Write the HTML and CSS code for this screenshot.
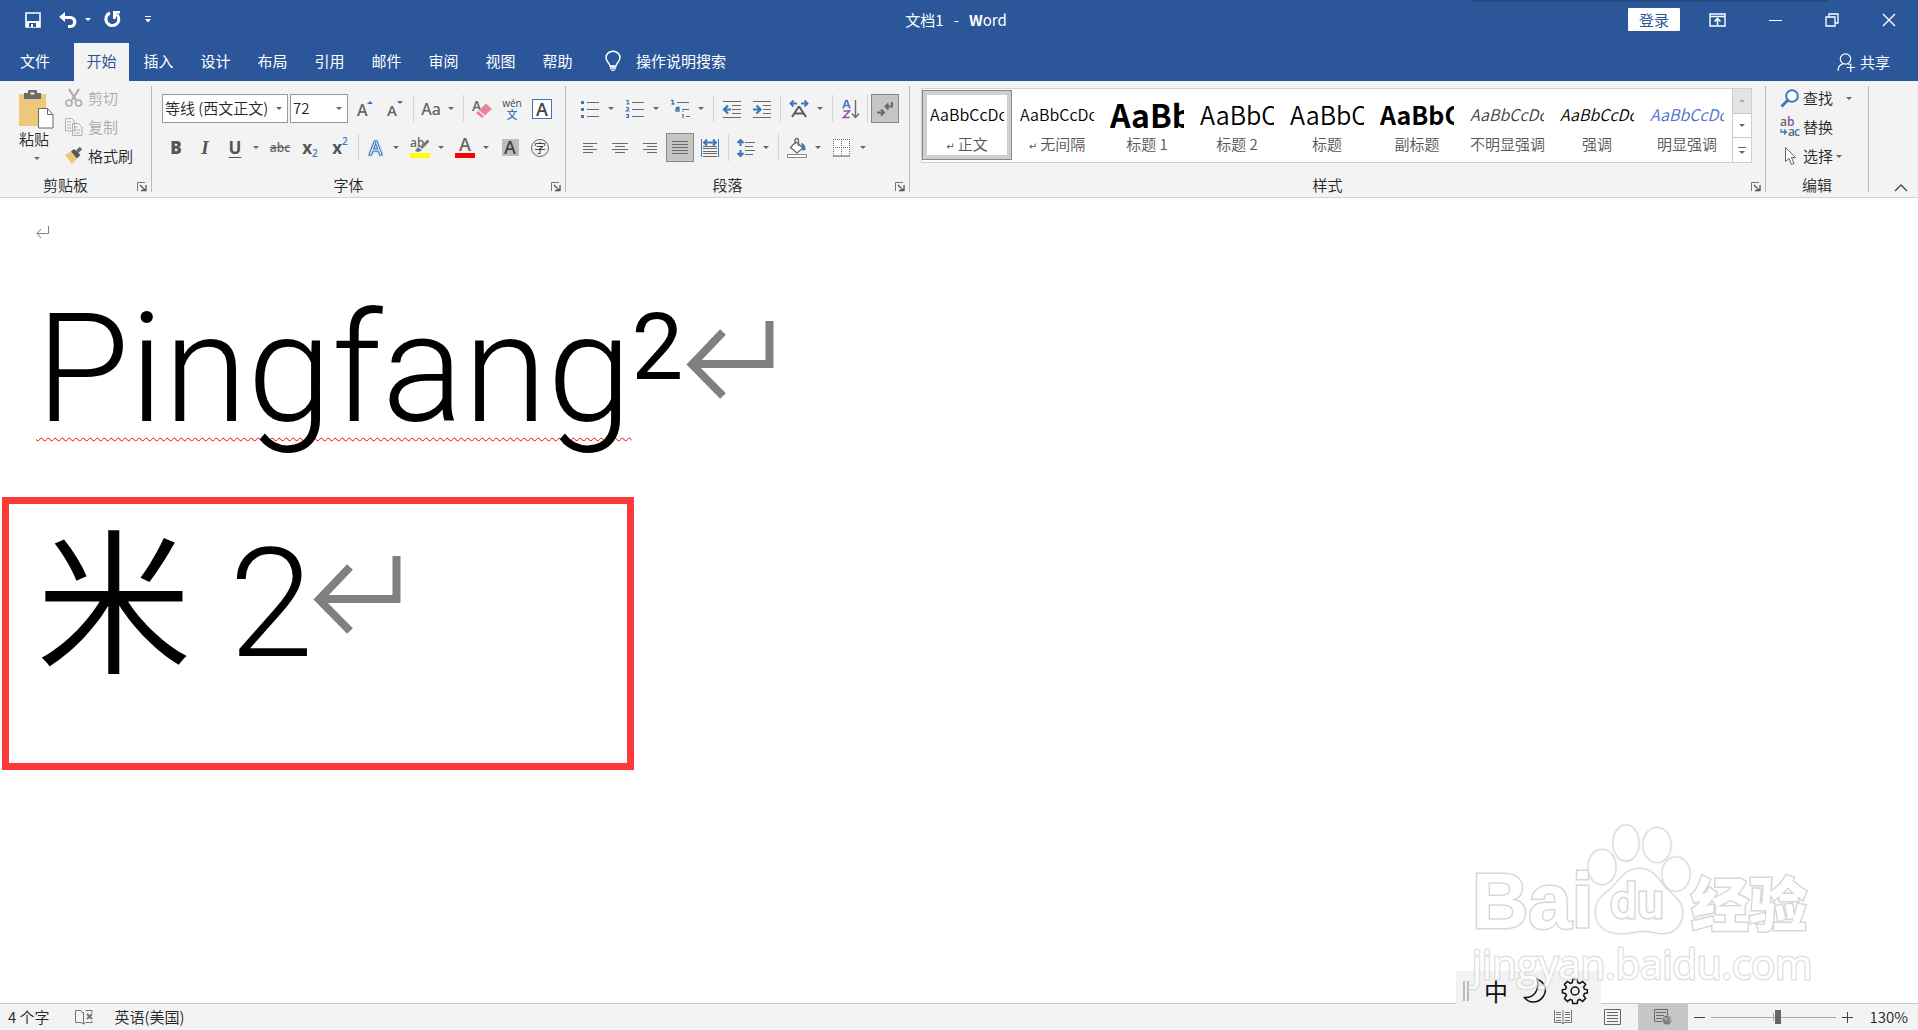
FILE: index.html
```html
<!DOCTYPE html>
<html lang="zh-CN">
<head>
<meta charset="utf-8">
<title>文档1 - Word</title>
<link rel="stylesheet" href="styles.css">
</head>
<body>
<div class="app">
  <header class="titlebar">
    <div class="quick">
      <button class="tb tb-save" aria-label="保存"><svg width="16" height="16" viewBox="0 0 16 16"><path d="M1 1h14v14H1z" fill="none" stroke="#fff" stroke-width="1.6"/><path d="M1 9h14v6H1z" fill="#fff"/><path d="M4 11h7v4H4z" fill="#2b579a"/><path d="M6 12h2v3H6z" fill="#fff"/></svg></button>
      <button class="tb" aria-label="撤消"><svg width="18" height="16" viewBox="0 0 18 16"><path d="M6 0L0 5l6 5V7h5a3 3 0 0 1 0 6H9v3h2.500a6 6 0 0 0 0-12H6z" fill="#fff"/></svg></button>
      <button class="dd dd-light" aria-label="撤消列表"></button>
      <button class="tb tb-redo" aria-label="重复"><svg width="18" height="17" viewBox="0 0 18 17"><path d="M6 2A6.500 6.500 0 1 0 13 3.500" fill="none" stroke="#fff" stroke-width="3"/><path d="M9 0h7v2.500h-3L11.500 8H9z" fill="#fff"/></svg></button>
      <button class="tb" aria-label="自定义快速访问工具栏"><svg width="6" height="7" viewBox="0 0 6 7"><path d="M0 .5h6" stroke="#fff"/><path d="M0 3h6L3 6.500z" fill="#fff"/></svg></button>
    </div>
    <div class="doc-title">文档1&nbsp;&nbsp; -&nbsp;&nbsp; <b>W</b>ord</div>
    <div class="window-controls">
      <button class="login">登录</button>
      <button class="win" aria-label="功能区显示选项"><svg width="17" height="14" viewBox="0 0 17 14"><path d="M1 1h15v12H1zM1 3.500h15" fill="none" stroke="#fff" stroke-width="1.400"/><path d="M8.500 12V6M5.500 8.500l3-3 3 3" fill="none" stroke="#fff" stroke-width="1.600"/></svg></button>
      <button class="win" aria-label="最小化"><svg width="14" height="14" viewBox="0 0 14 14"><path d="M1 7.500h13" stroke="#fff"/></svg></button>
      <button class="win" aria-label="还原"><svg width="14" height="14" viewBox="0 0 14 14"><path d="M1 4h9v9H1zM4 4V1h9v9h-3" fill="none" stroke="#fff" stroke-width="1.300"/></svg></button>
      <button class="win" aria-label="关闭"><svg width="14" height="14" viewBox="0 0 14 14"><path d="M1 1l12 12M13 1L1 13" stroke="#fff" stroke-width="1.400"/></svg></button>
    </div>
    <span class="top-shade"></span>
  </header>

  <nav class="tabs">
    <button class="tab tab-file">文件</button>
    <button class="tab tab-active">开始</button>
    <button class="tab">插入</button>
    <button class="tab">设计</button>
    <button class="tab">布局</button>
    <button class="tab">引用</button>
    <button class="tab">邮件</button>
    <button class="tab">审阅</button>
    <button class="tab">视图</button>
    <button class="tab">帮助</button>
    <button class="tell-me"><svg width="16" height="20" viewBox="0 0 16 20"><path d="M5 15c0-3-4-4-4-8.500a6.700 6 0 0 1 14 0C15 11 11 12 11 15z" fill="none" stroke="#fff" stroke-width="1.500"/><path d="M5 15h6v3.500H5z" fill="#fff" opacity=".8"/><path d="M6.500 19.500h3" stroke="#fff"/></svg>操作说明搜索</button>
    <button class="share"><svg width="19" height="19" viewBox="0 0 19 19"><circle cx="8.500" cy="6" r="5.200" fill="none" stroke="#fff" stroke-width="1.200"/><path d="M1 18c0-4 2-6.500 5-7.200M11 10.800l1.500 1M9.500 14.500H18M13.800 10.500V19" fill="none" stroke="#fff" stroke-width="1.200"/></svg>共享</button>
  </nav>

  <section class="ribbon">
    <div class="group group-clip">
      <div class="clip-body">
        <button class="paste"><svg width="35" height="39" viewBox="0 0 35 39"><rect y="4" width="27" height="32" rx="1" fill="#eec77d"/><path d="M5 3h4V1q0-1 1-1h7q1 0 1 1v2h4v6H5z" fill="#6a6a6a"/><path d="M11.500 3.500h4" stroke="#f3f3f3" stroke-width="2"/><path d="M19.500 18.500h9l5.500 6v13.500H19.500z" fill="#fff" stroke="#6a6a6a"/><path d="M28.500 18.500v6H34" fill="none" stroke="#6a6a6a"/></svg><span>粘贴</span><i class="caret"></i></button>
        <div class="stack">
          <button class="line-btn off"><svg width="18" height="18" viewBox="0 0 18 18"><path d="M4 0l7 11M14 0L7 11" stroke="#aaa" stroke-width="2.200"/><circle cx="4" cy="14" r="3" fill="none" stroke="#aaa" stroke-width="1.600"/><circle cx="13.500" cy="14" r="3" fill="none" stroke="#aaa" stroke-width="1.600"/></svg>剪切</button>
          <button class="line-btn off"><svg width="18" height="18" viewBox="0 0 18 18"><path d="M.5.500h6l3 3V13h-9zM7.500 5.500h6l3.500 3.500v8.500H7.500z" fill="#f6f3f6" stroke="#b5abb5"/><path d="M2 4h4M2 7h4M2 10h4M9.500 9h3M9.500 12h5.500M9.500 15h5.500" stroke="#b5abb5"/></svg>复制</button>
          <button class="line-btn"><svg width="18" height="18" viewBox="0 0 18 18"><path d="M0 8l6-3.500 6 7L7 17z" fill="#eec77d"/><path d="M6 4.500l3-2.500 6.500 6-3.500 3.500z" fill="#555"/><path d="M12 5l4-4" stroke="#6a6a6a" stroke-width="3.500"/></svg>格式刷</button>
        </div>
      </div>
      <div class="foot"><span>剪贴板</span><button class="launch" aria-label="剪贴板设置"><svg width="10" height="9" viewBox="0 0 10 9"><path d="M.5 9V.5H8" fill="none" stroke="#777"/><path d="M3 3l5 5M9 3v5.500H4" fill="none" stroke="#555" stroke-width="1.300"/></svg></button></div>
    </div>

    <div class="group group-font">
      <div class="rows">
        <div class="row">
          <span class="combo combo-font"><select aria-label="字体"><option>等线 (西文正文)</option></select></span>
          <span class="combo combo-size"><select aria-label="字号"><option>72</option></select></span>
          <button class="ic" aria-label="增大字号"><svg width="16" height="18" viewBox="0 0 16 18"><text x="0" y="16" class="t16">A</text><path d="M10 4l3-3 3 3z" fill="#3a78b8"/></svg></button>
          <button class="ic" aria-label="减小字号"><svg width="16" height="18" viewBox="0 0 16 18"><text x="0" y="16" class="t15">A</text><path d="M10 1h6l-3 3z" fill="#3a78b8"/></svg></button>
          <i class="sep"></i>
          <button class="ic ic-mid aa" aria-label="更改大小写">Aa</button><button class="dd" aria-label="大小写选项"></button>
          <i class="sep"></i>
          <button class="ic" aria-label="清除所有格式"><svg width="20" height="20" viewBox="0 0 20 20"><text x="0" y="12" class="t14">A</text><path d="M4 14L14 4.500l6 5.500L10 19z" fill="#e8849a"/><path d="M6.500 11.500l6 5.500" stroke="#f3f3f3" stroke-width="1.200"/></svg></button>
          <button class="ic pinyin" aria-label="拼音指南"><span>wén</span><b>文</b></button>
          <button class="ic" aria-label="字符边框"><span class="boxed-a">A</span></button>
        </div>
        <div class="row">
          <button class="ic ic-mid glyph" aria-label="加粗"><b>B</b></button>
          <button class="ic glyph serif" aria-label="倾斜"><i>I</i></button>
          <button class="ic glyph" aria-label="下划线"><u>U</u></button>
          <button class="dd" aria-label="下划线样式"></button>
          <button class="ic strike" aria-label="删除线"><s>abc</s></button>
          <button class="ic glyph" aria-label="下标">x<sub>2</sub></button>
          <button class="ic glyph" aria-label="上标">x<sup>2</sup></button>
          <i class="sep"></i>
          <button class="ic ic-mid" aria-label="文本效果"><svg width="20" height="20" viewBox="0 0 20 20"><text x="3" y="17" class="fx">A</text></svg></button><button class="dd" aria-label="文本效果选项"></button>
          <button class="ic" aria-label="突出显示"><svg width="20" height="20" viewBox="0 0 20 20"><text x="0" y="9" class="t12">ab</text><path d="M18.500 2.500L11 10" stroke="#777" stroke-width="3"/><path d="M8 9l4 3.500-4 1.500-3-1z" fill="#777"/><path d="M0 15h20v5H0z" fill="#ff0"/></svg></button><button class="dd" aria-label="突出显示颜色"></button>
          <button class="ic" aria-label="字体颜色"><svg width="20" height="20" viewBox="0 0 20 20"><text x="4" y="13" class="t18">A</text><path d="M0 15h20v5H0z" fill="red"/></svg></button><button class="dd" aria-label="字体颜色选项"></button>
          <button class="ic" aria-label="字符底纹"><span class="shade-a">A</span></button>
          <button class="ic" aria-label="带圈字符"><span class="ring">字</span></button>
        </div>
      </div>
      <div class="foot"><span>字体</span><button class="launch" aria-label="字体设置"><svg width="10" height="9" viewBox="0 0 10 9"><path d="M.5 9V.5H8" fill="none" stroke="#777"/><path d="M3 3l5 5M9 3v5.500H4" fill="none" stroke="#555" stroke-width="1.300"/></svg></button></div>
    </div>

    <div class="group group-para">
      <div class="rows">
        <div class="row">
          <button class="ic" aria-label="项目符号"><svg width="18" height="18" viewBox="0 0 18 18"><path d="M6 2.500h12M6 9.500h12M6 16.500h12" stroke="#6a6a6a"/><path d="M0 1h3v3H0zM0 8h3v3H0zM0 15h3v3H0z" fill="#3a78b8"/></svg></button><button class="dd" aria-label="项目符号库"></button>
          <button class="ic" aria-label="编号"><svg width="18" height="18" viewBox="0 0 18 18"><path d="M6 2.500h12M6 9.500h12M6 16.500h12" stroke="#6a6a6a"/><path d="M0 .5h2V4M.5 4h3M0 7.500h2.500V9L.5 11h3M0 14.500h2.500v3H0M1 16h1.500" fill="none" stroke="#3a78b8" stroke-width="1.200"/></svg></button><button class="dd" aria-label="编号库"></button>
          <button class="ic" aria-label="多级列表"><svg width="18" height="18" viewBox="0 0 18 18"><path d="M6 2.500h12M11 9.500h7M15 16.500h4" stroke="#6a6a6a"/><path d="M0 .5h2V4M.5 4h3M5 7.500h3V11H5V9h3M12 11v1M12 14v4" fill="none" stroke="#3a78b8" stroke-width="1.300"/></svg></button><button class="dd" aria-label="多级列表选项"></button>
          <i class="sep"></i>
          <button class="ic" aria-label="减少缩进量"><svg width="18" height="18" viewBox="0 0 18 18"><path d="M0 1.500h18M9 5.500h9M9 9.500h9M9 13.500h9M0 17.500h18" stroke="#6a6a6a"/><path d="M8 9.500H2M5 5.500L1 9.500l4 4" fill="none" stroke="#3a78b8" stroke-width="2.200"/></svg></button>
          <button class="ic" aria-label="增加缩进量"><svg width="18" height="18" viewBox="0 0 18 18"><path d="M0 1.500h18M10 5.500h8M10 9.500h8M10 13.500h8M0 17.500h18" stroke="#6a6a6a"/><path d="M0 9.500h7M3.500 5.500l4 4-4 4" fill="none" stroke="#3a78b8" stroke-width="2.200"/></svg></button>
          <i class="sep"></i>
          <button class="ic" aria-label="中文版式"><svg width="20" height="18" viewBox="0 0 20 18"><path d="M3 17L9.500 7h1L17 17M6 13.500h8" fill="none" stroke="#5a5a5a" stroke-width="2"/><path d="M8 3.500H2M4.500.5l-3 3 3 3M12 3.500h6M15.500.5l3 3-3 3" fill="none" stroke="#3a78b8" stroke-width="1.800"/></svg></button><button class="dd" aria-label="中文版式选项"></button>
          <i class="sep"></i>
          <button class="ic" aria-label="排序"><svg width="18" height="20" viewBox="0 0 18 20"><path d="M1 9.500L4 1.500h1l3 8M2.500 6.500h4" fill="none" stroke="#3a78b8" stroke-width="1.600"/><path d="M1.500 12h6l-6 6.500h6" fill="none" stroke="#8a4fa8" stroke-width="1.500"/><path d="M13.500 1v17M10 14.500l3.500 4 3.500-4" fill="none" stroke="#6a6a6a" stroke-width="1.400"/></svg></button>
          <i class="sep sep-tight"></i>
          <button class="ic ic-on" aria-label="显示编辑标记"><svg width="16" height="16" viewBox="0 0 16 16"><path d="M15 1v4.500H9M11.500 2.500l-3 3 3 3M0 11.500h6M4 8.500l3 3-3 3" fill="none" stroke="#6a6a6a" stroke-width="2"/></svg></button>
        </div>
        <div class="row">
          <button class="ic" aria-label="左对齐"><svg width="16" height="14" viewBox="0 0 16 14"><path d="M1 2.500h14M1 5.500h10M1 8.500h14M1 11.500h10" stroke="#6a6a6a"/></svg></button>
          <button class="ic" aria-label="居中"><svg width="16" height="14" viewBox="0 0 16 14"><path d="M0 2.500h16M3 5.500h10M0 8.500h16M3 11.500h10" stroke="#6a6a6a"/></svg></button>
          <button class="ic" aria-label="右对齐"><svg width="16" height="14" viewBox="0 0 16 14"><path d="M1 2.500h14M5 5.500h10M1 8.500h14M5 11.500h10" stroke="#6a6a6a"/></svg></button>
          <button class="ic ic-on" aria-label="两端对齐"><svg width="16" height="14" viewBox="0 0 16 14"><path d="M0 .5h16M0 3.500h16M0 6.500h16M0 9.500h16M0 12.500h16" stroke="#6a6a6a"/></svg></button>
          <button class="ic" aria-label="分散对齐"><svg width="18" height="18" viewBox="0 0 18 18"><path d="M.5 0v18M17.500 0v18" stroke="#3a78b8"/><path d="M2 7.500h14M2 9.500h14M2 12.500h14M2 14.500h14M2 17.500h14" stroke="#6a6a6a"/><path d="M3 3.500h12M6 .5l-3 3 3 3M12 .5l3 3-3 3" fill="none" stroke="#3a78b8" stroke-width="2"/></svg></button>
          <i class="sep"></i>
          <button class="ic ic-mid" aria-label="行距"><svg width="18" height="18" viewBox="0 0 18 18"><path d="M8 3.500h10M8 7.500h8M8 11.500h10M8 15.500h8" stroke="#6a6a6a"/><path d="M3.500 1v6M.5 4l3-3 3 3M3.500 17v-6M.5 14l3 3 3-3" fill="none" stroke="#3a78b8" stroke-width="2"/></svg></button><button class="dd" aria-label="行距选项"></button>
          <i class="sep"></i>
          <button class="ic" aria-label="底纹"><svg width="20" height="20" viewBox="0 0 20 20"><path d="M9 4l7 6-6 5-6.500-5.500z" fill="#fff" stroke="#6a6a6a" stroke-width="1.300"/><path d="M8 6V1.500q2-2 3.500 0V8" fill="none" stroke="#6a6a6a" stroke-width="1.300"/><path d="M14 5q5 1 4.500 7l-3 .5z" fill="#3a78b8"/><path d="M.5 16.500h19v3H.5z" fill="#fff" stroke="#888"/></svg></button><button class="dd" aria-label="底纹颜色"></button>
          <button class="ic" aria-label="边框"><svg width="18" height="18" viewBox="0 0 18 18"><path d="M0 0h17v17H0z" fill="#fff"/><path d="M.5 0v17M8.500 0v17M16.500 0v17M0 .5h17M0 8.500h17" stroke="#666" stroke-dasharray="1 1"/><path d="M0 17h17" stroke="#555"/></svg></button><button class="dd" aria-label="边框选项"></button>
        </div>
      </div>
      <div class="foot"><span>段落</span><button class="launch" aria-label="段落设置"><svg width="10" height="9" viewBox="0 0 10 9"><path d="M.5 9V.5H8" fill="none" stroke="#777"/><path d="M3 3l5 5M9 3v5.500H4" fill="none" stroke="#555" stroke-width="1.300"/></svg></button></div>
    </div>

    <div class="group group-styles">
      <div class="gallery">
        <div class="cards">
          <button class="card card-on"><span class="pv">AaBbCcDc</span><span class="nm"><small>↵</small> 正文</span></button>
          <button class="card"><span class="pv">AaBbCcDc</span><span class="nm"><small>↵</small> 无间隔</span></button>
          <button class="card"><span class="pv pv-h1">AaBb</span><span class="nm">标题 1</span></button>
          <button class="card"><span class="pv pv-h2">AaBbC</span><span class="nm">标题 2</span></button>
          <button class="card"><span class="pv pv-h2">AaBbC</span><span class="nm">标题</span></button>
          <button class="card"><span class="pv pv-h2 pv-bold">AaBbC</span><span class="nm">副标题</span></button>
          <button class="card"><span class="pv pv-it pv-gray">AaBbCcDc</span><span class="nm">不明显强调</span></button>
          <button class="card"><span class="pv pv-it">AaBbCcDc</span><span class="nm">强调</span></button>
          <button class="card"><span class="pv pv-it pv-blue">AaBbCcDc</span><span class="nm">明显强调</span></button>
        </div>
        <div class="scroller">
          <button class="off" aria-label="上一行"><i class="caret up"></i></button>
          <button aria-label="下一行"><i class="caret"></i></button>
          <button class="more" aria-label="其他"><i class="caret"></i></button>
        </div>
      </div>
      <div class="foot"><span>样式</span><button class="launch" aria-label="样式窗格"><svg width="10" height="9" viewBox="0 0 10 9"><path d="M.5 9V.5H8" fill="none" stroke="#777"/><path d="M3 3l5 5M9 3v5.500H4" fill="none" stroke="#555" stroke-width="1.300"/></svg></button></div>
    </div>

    <div class="group group-edit">
      <div class="stack">
        <button class="line-btn"><svg width="20" height="19" viewBox="0 0 20 19"><circle cx="12" cy="7" r="5.800" fill="#fff" stroke="#3a78b8" stroke-width="2"/><path d="M8 11l-6.500 6.500" stroke="#3a78b8" stroke-width="3"/></svg>查找<i class="caret caret-far"></i></button>
        <button class="line-btn"><svg width="20" height="19" viewBox="0 0 20 19"><text x="0" y="8" class="t12">a</text><text x="7" y="8" class="t12 violet">b</text><text x="8" y="18" class="t12">a</text><text x="14" y="18" class="t12 blue">c</text><path d="M1 11v3h5M4 11.500l2.500 2.500L4 16.500" fill="none" stroke="#3a78b8" stroke-width="1.300"/></svg>替换</button>
        <button class="line-btn"><svg width="20" height="19" viewBox="0 0 20 19"><path d="M5.500.500v14l3.500-3 2.500 6 2.500-1-2.500-6h4z" fill="#fff" stroke="#666"/></svg>选择<i class="caret"></i></button>
      </div>
      <div class="foot"><span>编辑</span></div>
    </div>
    <button class="collapse" aria-label="折叠功能区"><svg width="14" height="8" viewBox="0 0 14 8"><path d="M1 7l6-6 6 6" fill="none" stroke="#444" stroke-width="1.300"/></svg></button>
  </section>

  <main class="page">
    <p class="para-empty"><svg width="14" height="12" viewBox="0 0 14 12"><path d="M12.500 0v7.500H1M5 3L1 7.500 5 12" fill="none" stroke="#808080"/></svg></p>
    <p class="big"><span class="squiggle">Pingfang</span><sup>2</sup><svg class="ret" width="88" height="78" viewBox="0 0 88 78"><path d="M83.500 0v43H8M37 11L6 43.500 37 75" fill="none" stroke="#808080" stroke-width="8"/></svg></p>
    <div class="framed">
      <p class="big"><span class="han">米</span> 2<svg class="ret" width="88" height="78" viewBox="0 0 88 78"><path d="M83.500 0v43H8M37 11L6 43.500 37 75" fill="none" stroke="#808080" stroke-width="8"/></svg></p>
    </div>
  </main>

  <footer class="status">
    <span class="words">4 个字</span>
    <button class="st-btn proof" aria-label="校对"><svg width="18" height="15" viewBox="0 0 18 15"><path d="M8.500 2.500H7L6 .5H.500v12H6l2.500 1.500 2-1.500h6.500V11M8.500 2v12M10.500.500H17V3" fill="none" stroke="#777"/><path d="M12 4l5 5M17 4l-5 5" stroke="#777" stroke-width="2"/></svg></button>
    <button class="st-btn lang">英语(美国)</button>
    <div class="views">
      <button class="view" aria-label="阅读视图"><svg width="18" height="16" viewBox="0 0 18 16"><path d="M.5 1v12.500H7l2 1 2-1h6.500V1M9 1v14M2 3.500h5M2 5.500h5M2 8.500h5M2 11.500h5M11 3.500h5M11 5.500h5M11 8.500h5M11 11.500h5" fill="none" stroke="#777"/></svg></button>
      <button class="view" aria-label="页面视图"><svg width="17" height="16" viewBox="0 0 17 16"><path d="M.5.500h16v15H.500zM3 3.500h11M3 6.500h11M3 9.500h11M3 12.500h11" fill="none" stroke="#666"/></svg></button>
      <button class="view view-on" aria-label="Web 版式视图"><svg width="18" height="16" viewBox="0 0 18 16"><path d="M8 12.500H.500V.500h13V6M2 3.500h10M2 6.500h8M2 9.500h6" fill="none" stroke="#6a6a6a"/><circle cx="13" cy="11" r="4.500" fill="#7c7c7c"/><path d="M10 9l3 1-1 2M14 8l3 2-2 3" stroke="#c6c6c6" fill="none"/></svg></button>
      <button class="zoom-btn" aria-label="缩小"><svg width="11" height="11" viewBox="0 0 11 11"><path d="M0 5.500h11" stroke="#444"/></svg></button>
      <input class="zoom" type="range" min="0" max="100" value="54" aria-label="缩放">
      <button class="zoom-btn" aria-label="放大"><svg width="11" height="11" viewBox="0 0 11 11"><path d="M0 5.500h11M5.500 0v11" stroke="#444"/></svg></button>
      <button class="st-btn percent">130%</button>
    </div>
  </footer>

  <div class="ime">
    <i class="grip"></i><span>中</span>
    <svg width="24" height="26" viewBox="0 0 24 26"><path d="M14 1c7 3 11 10 6.500 17C16 25.500 6 26 1.500 19.500 11 20 17 12 14 1z" fill="none" stroke="#111" stroke-width="1.500"/></svg>
    <svg width="26" height="26" viewBox="0 0 26 26"><path d="M10.800 1.200h4.400l.6 3.400 2 .8 2.800-2 3 3-2 2.800.8 2 3 .6v3l-3 .8-.8 2 2 2.800-3 3-2.800-2-2 .8-.6 3.200h-4.400l-.6-3.200-2-.8-2.800 2-3-3 2-2.800-.8-2-3.200-.8v-3l3.200-.6.8-2-2-2.800 3-3 2.800 2 2-.8z" fill="none" stroke="#111" stroke-width="1.500"/><circle cx="13" cy="13" r="4" fill="none" stroke="#111" stroke-width="1.500"/></svg>
  </div>

  <div class="mark">
    <div class="mark-top">
      <span class="mark-bai">Bai</span>
      <span class="paw"><svg width="104" height="112" viewBox="0 0 104 112"><g fill="#fff" stroke="#d6d6d6" stroke-width="2"><ellipse cx="15" cy="43" rx="13.500" ry="17"/><ellipse cx="39" cy="19" rx="12.500" ry="17.500"/><ellipse cx="70" cy="21" rx="13.500" ry="17"/><ellipse cx="89" cy="50" rx="13.500" ry="16.500"/><path d="M52 45c15 0 20 12 28 21 9 8 16 13 15 24-1 13-10 20-21 19-9-1-14-3-22-2-9 1-13 3-21 2-14-1-22-9-22-21 0-11 7-17 14-22 10-8 14-21 29-21z"/></g></svg><b>du</b></span>
      <span class="mark-cn">经验</span>
    </div>
    <div class="mark-url">jingyan.baidu.com</div>
  </div>
</div>
</body>
</html>
```
FILE: styles.css
```css
* { box-sizing: border-box; }

body {
  margin: 0;
  font: 350 15px/20px "Noto Sans CJK SC", sans-serif;
  color: #262626;
  background: #fff;
}

button, select, input {
  font: inherit;
  color: inherit;
  margin: 0;
  padding: 0;
  border: 0;
  background: none;
}

svg { display: block; flex: none; overflow: visible; }
p { margin: 0; }

.app {
  position: relative;
  display: flex;
  flex-direction: column;
  min-height: 100vh;
  overflow: hidden;
}

/* title bar */
.titlebar {
  position: relative;
  display: grid;
  grid-template-columns: 1fr auto 1fr;
  align-items: center;
  height: 43px;
  padding-bottom: 4px;
  background: #2b579a;
  color: #fff;
  font-weight: 400;
}
.quick { display: flex; align-items: center; padding-left: 25px; }
.tb-save { margin-right: 18px; }
.tb-redo { margin-left: 2px; margin-right: 23px; }
.doc-title { padding-right: 6px; }
.doc-title b { font-weight: 700; }
.window-controls {
  display: flex;
  justify-content: flex-end;
  align-items: center;
  padding-right: 1px;
}
.login {
  width: 52px;
  height: 23px;
  margin-right: 9px;
  background: #fff;
  color: #2b579a;
  line-height: 22px;
  border-radius: 1px;
}
.win {
  width: 57px;
  height: 24px;
  display: flex;
  align-items: center;
  justify-content: center;
}
.top-shade {
  position: absolute;
  top: 0;
  right: 90px;
  width: 356px;
  height: 2px;
  background: #244a80;
}

/* tabs */
.tabs {
  display: flex;
  gap: 2px;
  height: 38px;
  background: #2b579a;
  color: #fff;
  font-weight: 400;
}
.tab { width: 55px; height: 38px; padding-bottom: 2px; }
.tab-file { width: 72px; padding-right: 2px; }
.tab-active { background: #f3f3f3; color: #2b579a; }
.tell-me {
  display: flex;
  align-items: center;
  gap: 15px;
  margin-left: 18px;
  padding-bottom: 2px;
}
.share {
  display: flex;
  align-items: center;
  gap: 4px;
  margin-left: auto;
  padding-right: 28px;
}

/* ribbon */
.ribbon {
  display: flex;
  height: 117px;
  padding: 5px 0;
  background: #f3f3f3;
  border-bottom: 1px solid #d2d2d2;
}
.group {
  display: flex;
  flex-direction: column;
  justify-content: space-between;
  border-right: 1px solid #b8b8b8;
}
.group-clip { width: 152px; }
.group-font { width: 414px; padding-left: 10px; }
.group-para { width: 344px; padding-left: 9px; }
.group-styles { flex: 1; min-width: 0; padding-left: 11px; }
.group-edit { width: 103px; padding-left: 14px; }

.foot { display: flex; align-items: center; height: 15px; }
.foot span { flex: 1; text-align: center; }
.group-font .foot { margin-left: -10px; }
.group-para .foot { margin-left: -9px; }
.group-styles .foot { margin-left: -11px; }
.group-edit .foot { margin-left: -14px; }
.launch { width: 20px; height: 12px; padding: 3px 0 0 6px; }

.caret {
  width: 0;
  height: 0;
  border: 3px solid transparent;
  border-top-color: #666;
  border-bottom: 0;
}
.up { border-top: 0; border-bottom: 3px solid #aaa; }

.clip-body { display: flex; padding-left: 19px; }
.paste {
  display: flex;
  flex-direction: column;
  align-items: center;
  width: 35px;
  margin-right: 11px;
  padding-top: 4px;
}
.paste span { align-self: flex-start; white-space: nowrap; margin-bottom: 8px; }
.stack { display: flex; flex-direction: column; }
.line-btn {
  display: flex;
  align-items: center;
  gap: 5px;
  height: 29px;
  padding-bottom: 5px;
  white-space: nowrap;
}
.group-edit .line-btn { gap: 3px; }
.line-btn.off { color: #aaa; }
.caret-far { margin-left: 10px; }

.rows { display: flex; flex-direction: column; gap: 10px; padding-top: 8px; }
.row { display: flex; align-items: center; height: 29px; }
.combo {
  position: relative;
  display: block;
  height: 29px;
  margin-right: 2px;
  background: #fff;
  border: 1px solid #999;
}
.combo::after {
  content: "";
  position: absolute;
  right: 5px;
  top: 12px;
  border: 3px solid transparent;
  border-top-color: #666;
  border-bottom: 0;
}
.combo select {
  appearance: none;
  width: 100%;
  height: 27px;
  padding: 0 0 2px 2px;
}
.combo-font { width: 126px; }
.combo-size { width: 58px; }

.ic {
  display: flex;
  flex: none;
  align-items: center;
  justify-content: center;
  width: 30px;
  height: 29px;
}
.ic-mid { width: 28px; }
.ic-on {
  width: 28px;
  margin: 0 1px;
  background: #c6c6c6;
  border: 1px solid #888;
}
.dd {
  display: flex;
  flex: none;
  align-items: center;
  justify-content: center;
  width: 12px;
  height: 24px;
  margin-right: 3px;
}
.dd::after {
  content: "";
  border: 3px solid transparent;
  border-top-color: #666;
  border-bottom: 0;
}
.dd-light { width: 22px; }
.dd-light::after { border-top-color: #fff; }
.sep {
  width: 1px;
  height: 27px;
  margin: 0 3px;
  background: #d4d4d4;
}
.sep-tight { margin: 0 2px 0 1px; }

.aa { font: 500 16px/20px "Noto Sans", sans-serif; color: #666; }
.glyph { font: 700 17px/20px "Open Sans", sans-serif; color: #555; }
.glyph sub, .glyph sup {
  font-size: 10px;
  line-height: 14px;
  color: #3a78b8;
  font-weight: 600;
}
.glyph sub { align-self: flex-end; padding-bottom: 2px; }
.glyph sup { align-self: flex-start; padding-top: 1px; }
.glyph u { text-underline-offset: 3px; text-decoration-thickness: 1px; }
.serif { font-family: "Liberation Serif", serif; font-size: 19px; }
.strike { font: 600 12px/20px "Open Sans", sans-serif; color: #666; }
.fx {
  font: 600 20px "Open Sans", sans-serif;
  fill: #fff;
  stroke: #3a78b8;
  stroke-width: 1px;
  filter: drop-shadow(0 0 1px #8abcf0);
}
.pinyin { flex-direction: column; }
.pinyin span { font: 400 10px/10px "Open Sans", sans-serif; color: #444; }
.pinyin b { font-size: 11px; line-height: 12px; font-weight: 500; color: #3a78b8; }
.boxed-a, .shade-a {
  width: 20px;
  height: 20px;
  font: 600 18px/18px "Open Sans", sans-serif;
  color: #444;
  background: #fff;
  border: 1px solid #3a78b8;
}
.shade-a { width: 17px; height: 17px; line-height: 17px; background: #bdbdbd; border: 0; }
.ring {
  width: 18px;
  height: 18px;
  font-size: 12px;
  line-height: 16px;
  border: 1px solid #666;
  border-radius: 50%;
}

.t12, .t14, .t15, .t16, .t18 { font-family: "Open Sans", sans-serif; font-weight: 600; fill: #666; }
.t12 { font-size: 12px; }
.t14 { font-size: 14px; }
.t15 { font-size: 15px; }
.t16 { font-size: 16px; }
.t18 { font-size: 18px; }
.violet { fill: #8a4fa8; }
.blue { fill: #3a78b8; }

/* style gallery */
.gallery {
  display: flex;
  height: 75px;
  margin: 2px 13px 0 0;
  background: #fff;
  border: 1px solid #d0d0d0;
}
.cards { display: flex; flex: 1; min-width: 0; overflow: hidden; padding-top: 1px; }
.card {
  display: flex;
  flex: 1;
  flex-direction: column;
  min-width: 0;
  height: 70px;
  padding: 11px 8px 0;
}
.card-on { padding: 6px 3px 0; border: 5px solid #cfcfcb; outline: 1px solid #888; outline-offset: -1px; }
.pv {
  height: 33px;
  width: 100%;
  overflow: hidden;
  white-space: nowrap;
  text-align: left;
  color: #000;
  font-size: 16px;
  line-height: 26px;
}
.pv-h1 { font-size: 32px; font-weight: 700; }
.pv-h2 { font-size: 25px; }
.pv-bold { font-weight: 700; }
.pv-it { font-style: italic; }
.pv-gray { color: #404040; }
.pv-blue { color: #4472c4; }
.nm { width: 100%; color: #555; text-align: center; line-height: 20px; white-space: nowrap; }
.nm small { font: 10px/10px "DejaVu Sans", sans-serif; }
.scroller { display: flex; flex-direction: column; width: 19px; border-left: 1px solid #c8c8c8; }
.scroller button {
  display: flex;
  flex: 1;
  flex-direction: column;
  align-items: center;
  justify-content: center;
  border-bottom: 1px solid #c8c8c8;
}
.scroller button:last-child { border: 0; }
.scroller .off { background: #e4e4e4; }
.more::before { content: ""; width: 8px; height: 1px; margin-bottom: 3px; background: #666; }

.collapse { align-self: flex-end; margin: 0 9px 0 25px; width: 15px; height: 8px; }

/* document */
.page { flex: 1; padding: 28px 0 0 36px; color: #000; }
.para-empty { height: 55px; }
.big {
  display: flex;
  height: 216px;
  font-family: Roboto, "Noto Sans CJK SC", sans-serif;
  font-size: 152px;
  line-height: 176px;
  font-weight: 300;
  white-space: pre;
}
.big sup { font-size: 92px; line-height: 134px; font-weight: 400; }
.han { font: 350 156px/154px "Noto Sans CJK SC", sans-serif; }
.squiggle {
  text-decoration: underline wavy #f00 1px;
  text-decoration-skip-ink: none;
  text-underline-offset: 16px;
}
.ret { margin: 40px 0 0 3px; }
.framed {
  width: 632px;
  height: 273px;
  margin-left: -34px;
  padding: 12px 0 0 27px;
  border: 7px solid #fd3939;
}
.framed .ret { margin-left: 0; }

/* status bar */
.status {
  display: flex;
  align-items: center;
  height: 27px;
  padding-left: 8px;
  background: #f3f3f3;
  border-top: 1px solid #c6c6c6;
}
.proof { margin-left: 25px; }
.lang { margin-left: 22px; }
.views { display: flex; align-items: center; margin-left: auto; padding-right: 10px; }
.view {
  display: flex;
  align-items: center;
  justify-content: center;
  width: 50px;
  height: 26px;
}
.view-on { background: #c6c6c6; }
.zoom-btn { margin: 0 6px; }
.percent { margin-left: 11px; }
.zoom {
  appearance: none;
  width: 125px;
  height: 16px;
  background:
    linear-gradient(#aaa, #aaa) center / 1px 8px no-repeat,
    linear-gradient(#aaa, #aaa) center / 100% 1px no-repeat;
}
.zoom::-webkit-slider-thumb { appearance: none; width: 6px; height: 14px; background: #666; }

/* floating input bar */
.ime {
  position: absolute;
  right: 317px;
  bottom: 20px;
  display: flex;
  align-items: center;
  gap: 15px;
  width: 145px;
  height: 39px;
  padding-left: 7px;
  background: #f2f2f2;
  color: #111;
}
.ime span { font-size: 24px; line-height: 36px; font-weight: 400; }
.grip { width: 6px; height: 20px; border: solid #bbb; border-width: 0 2px; }

/* watermark */
.mark {
  position: absolute;
  right: 102px;
  bottom: 38px;
  width: 344px;
  color: #fff;
  pointer-events: none;
  -webkit-text-stroke: 3px #d6d6d6;
  paint-order: stroke fill;
  text-shadow: 0 0 2px #ddd;
}
.mark-top { display: flex; align-items: flex-end; height: 112px; }
.mark-bai { width: 115px; font: 700 78px/70px "Liberation Sans", sans-serif; }
.paw { position: relative; }
.paw svg { filter: drop-shadow(0 0 1px #ddd); }
.paw b { position: absolute; left: 23px; top: 50px; font: 500 48px/56px "Roboto", sans-serif; }
.mark-cn { font-size: 58px; line-height: 70px; font-weight: 900; }
.mark-url { font: 400 40px/56px "Open Sans", sans-serif; opacity: .7; }
```
